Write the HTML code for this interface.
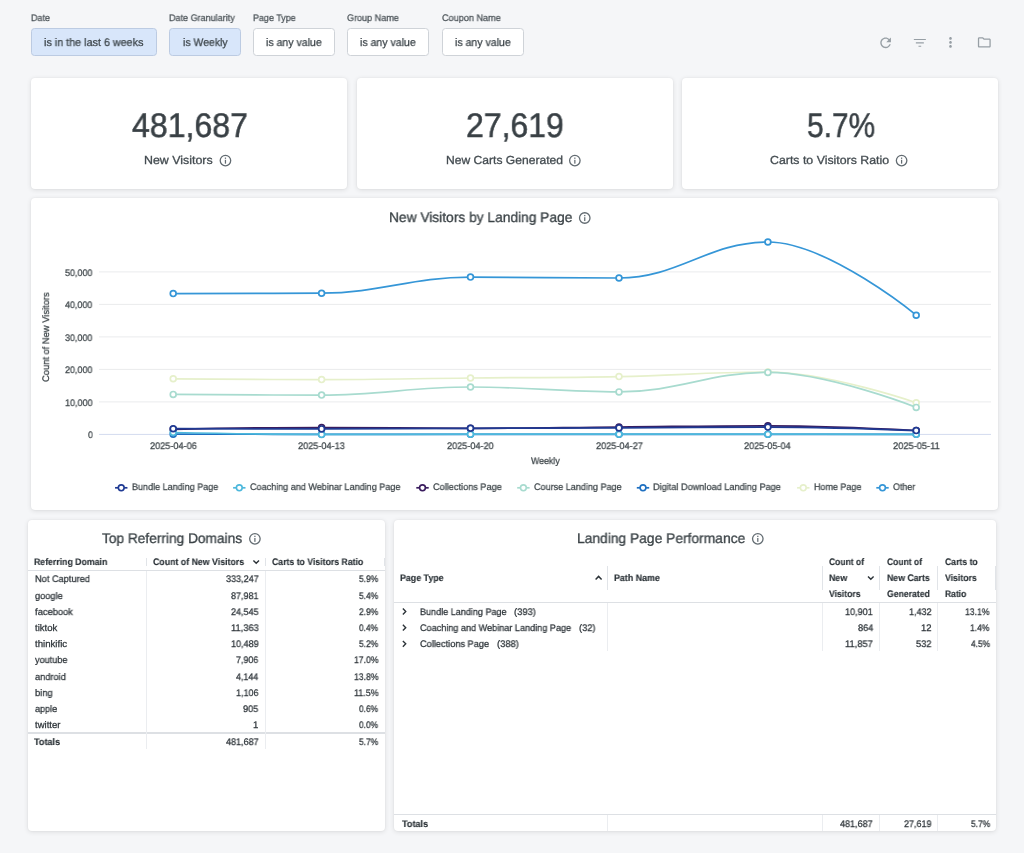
<!DOCTYPE html>
<html>
<head>
<meta charset="utf-8">
<title>Dashboard</title>
<style>
*{box-sizing:border-box;margin:0;padding:0}
html,body{width:1024px;height:853px;overflow:hidden;background:#f5f6f8;font-family:"Liberation Sans",sans-serif;color:#3a4245}
.abs{position:absolute}
.t{position:absolute;will-change:transform;text-rendering:geometricPrecision;white-space:nowrap;line-height:normal;transform-origin:0 0}
.fbtn{position:absolute;top:28.3px;height:27.8px;border:1px solid #cfd3d8;border-radius:3.5px;background:#fff}
.fbtn.on{background:#d8e6fa;border-color:#bccbe2}
.card{position:absolute;background:#fff;border-radius:4px;box-shadow:0 1px 5px rgba(0,0,0,0.105),0 0 2px rgba(0,0,0,0.06)}
</style>
</head>
<body>
<div class="fbtn on" style="left:31.2px;width:125.5px"></div>
<div class="fbtn on" style="left:169.3px;width:71.3px"></div>
<div class="fbtn" style="left:253.1px;width:81.5px"></div>
<div class="fbtn" style="left:347.3px;width:81.9px"></div>
<div class="fbtn" style="left:441.9px;width:81.8px"></div>
<div class="card" style="left:31px;top:78px;width:316px;height:111px"></div>
<div class="card" style="left:357px;top:78px;width:316px;height:111px"></div>
<div class="card" style="left:682px;top:78px;width:316px;height:111px"></div>
<div class="card" style="left:31px;top:198.3px;width:967px;height:311.7px"></div>
<div class="card" style="left:28px;top:519.5px;width:357px;height:311.5px"></div>
<div class="card" style="left:394.3px;top:519.5px;width:602px;height:311.5px"></div>
<div class="abs" style="left:28.00px;top:569.60px;width:357.00px;height:1.50px;background:#dde0e4"></div><div class="abs" style="left:28.00px;top:732.10px;width:357.00px;height:1.50px;background:#dde0e4"></div><div class="abs" style="left:146.20px;top:571.00px;width:1.00px;height:177.50px;background:#ebedf0"></div><div class="abs" style="left:146.20px;top:557.60px;width:1.00px;height:8.50px;background:#e1e4e8"></div><div class="abs" style="left:264.90px;top:571.00px;width:1.00px;height:177.50px;background:#ebedf0"></div><div class="abs" style="left:264.90px;top:557.60px;width:1.00px;height:8.50px;background:#e1e4e8"></div><div class="abs" style="left:383.80px;top:557.60px;width:1.00px;height:8.50px;background:#e1e4e8"></div><div class="abs" style="left:394.30px;top:601.60px;width:602.00px;height:1.50px;background:#dde0e4"></div><div class="abs" style="left:394.30px;top:813.70px;width:602.00px;height:1.50px;background:#dde0e4"></div><div class="abs" style="left:607.00px;top:603.00px;width:1.00px;height:47.50px;background:#ebedf0"></div><div class="abs" style="left:607.00px;top:815.00px;width:1.00px;height:16.00px;background:#ebedf0"></div><div class="abs" style="left:607.00px;top:565.80px;width:1.00px;height:24.00px;background:#e1e4e8"></div><div class="abs" style="left:821.50px;top:603.00px;width:1.00px;height:47.50px;background:#ebedf0"></div><div class="abs" style="left:821.50px;top:815.00px;width:1.00px;height:16.00px;background:#ebedf0"></div><div class="abs" style="left:821.50px;top:565.80px;width:1.00px;height:24.00px;background:#e1e4e8"></div><div class="abs" style="left:879.20px;top:603.00px;width:1.00px;height:47.50px;background:#ebedf0"></div><div class="abs" style="left:879.20px;top:815.00px;width:1.00px;height:16.00px;background:#ebedf0"></div><div class="abs" style="left:879.20px;top:565.80px;width:1.00px;height:24.00px;background:#e1e4e8"></div><div class="abs" style="left:937.40px;top:603.00px;width:1.00px;height:47.50px;background:#ebedf0"></div><div class="abs" style="left:937.40px;top:815.00px;width:1.00px;height:16.00px;background:#ebedf0"></div><div class="abs" style="left:937.40px;top:565.80px;width:1.00px;height:24.00px;background:#e1e4e8"></div><div class="abs" style="left:994.60px;top:565.80px;width:1.00px;height:24.00px;background:#e1e4e8"></div>
<svg class="abs" style="left:0;top:0" width="1024" height="853" viewBox="0 0 1024 853">
<rect x="99" y="271.4" width="892" height="1" fill="#eaebed"/>
<rect x="99" y="303.9" width="892" height="1" fill="#eaebed"/>
<rect x="99" y="336.4" width="892" height="1" fill="#eaebed"/>
<rect x="99" y="368.9" width="892" height="1" fill="#eaebed"/>
<rect x="99" y="401.4" width="892" height="1" fill="#eaebed"/>
<rect x="99" y="433.9" width="892" height="1" fill="#d3dbef"/>
<path d="M173.20 293.60 C173.20 293.60 262.24 293.60 321.60 293.20 C381.16 292.80 410.94 277.10 470.50 277.10 C529.90 277.10 559.60 278.00 619.00 278.00 C678.56 278.00 708.34 242.00 767.90 242.00 C827.22 242.00 916.20 315.20 916.20 315.20" fill="none" stroke="#3596d7" stroke-width="1.7" stroke-linecap="round" stroke-linejoin="round"/>
<circle cx="173.20" cy="293.60" r="2.9" fill="#fff" stroke="#3596d7" stroke-width="1.7"/>
<circle cx="321.60" cy="293.20" r="2.9" fill="#fff" stroke="#3596d7" stroke-width="1.7"/>
<circle cx="470.50" cy="277.10" r="2.9" fill="#fff" stroke="#3596d7" stroke-width="1.7"/>
<circle cx="619.00" cy="278.00" r="2.9" fill="#fff" stroke="#3596d7" stroke-width="1.7"/>
<circle cx="767.90" cy="242.00" r="2.9" fill="#fff" stroke="#3596d7" stroke-width="1.7"/>
<circle cx="916.20" cy="315.20" r="2.9" fill="#fff" stroke="#3596d7" stroke-width="1.7"/>
<path d="M173.20 378.80 C173.20 378.80 262.24 379.60 321.60 379.60 C381.16 379.60 410.94 378.60 470.50 378.00 C529.90 377.40 559.60 377.80 619.00 376.60 C678.56 375.40 708.34 372.00 767.90 372.00 C827.22 372.00 916.20 402.70 916.20 402.70" fill="none" stroke="#e6f0cb" stroke-width="1.7" stroke-linecap="round" stroke-linejoin="round"/>
<circle cx="173.20" cy="378.80" r="2.9" fill="#fff" stroke="#e6f0cb" stroke-width="1.7"/>
<circle cx="321.60" cy="379.60" r="2.9" fill="#fff" stroke="#e6f0cb" stroke-width="1.7"/>
<circle cx="470.50" cy="378.00" r="2.9" fill="#fff" stroke="#e6f0cb" stroke-width="1.7"/>
<circle cx="619.00" cy="376.60" r="2.9" fill="#fff" stroke="#e6f0cb" stroke-width="1.7"/>
<circle cx="767.90" cy="372.00" r="2.9" fill="#fff" stroke="#e6f0cb" stroke-width="1.7"/>
<circle cx="916.20" cy="402.70" r="2.9" fill="#fff" stroke="#e6f0cb" stroke-width="1.7"/>
<path d="M173.20 434.20 C173.20 434.20 262.24 434.30 321.60 434.30 C381.16 434.30 410.94 434.30 470.50 434.30 C529.90 434.30 559.60 434.30 619.00 434.30 C678.56 434.30 708.34 434.30 767.90 434.30 C827.22 434.30 916.20 434.30 916.20 434.30" fill="none" stroke="#1f70c1" stroke-width="1.7" stroke-linecap="round" stroke-linejoin="round"/>
<circle cx="173.20" cy="434.20" r="2.9" fill="#fff" stroke="#1f70c1" stroke-width="1.7"/>
<circle cx="321.60" cy="434.30" r="2.9" fill="#fff" stroke="#1f70c1" stroke-width="1.7"/>
<circle cx="470.50" cy="434.30" r="2.9" fill="#fff" stroke="#1f70c1" stroke-width="1.7"/>
<circle cx="619.00" cy="434.30" r="2.9" fill="#fff" stroke="#1f70c1" stroke-width="1.7"/>
<circle cx="767.90" cy="434.30" r="2.9" fill="#fff" stroke="#1f70c1" stroke-width="1.7"/>
<circle cx="916.20" cy="434.30" r="2.9" fill="#fff" stroke="#1f70c1" stroke-width="1.7"/>
<path d="M173.20 394.40 C173.20 394.40 262.24 395.10 321.60 395.10 C381.16 395.10 410.94 387.00 470.50 387.00 C529.90 387.00 559.60 391.90 619.00 391.90 C678.56 391.90 708.34 372.40 767.90 372.40 C827.22 372.40 916.20 407.40 916.20 407.40" fill="none" stroke="#a8dbcf" stroke-width="1.7" stroke-linecap="round" stroke-linejoin="round"/>
<circle cx="173.20" cy="394.40" r="2.9" fill="#fff" stroke="#a8dbcf" stroke-width="1.7"/>
<circle cx="321.60" cy="395.10" r="2.9" fill="#fff" stroke="#a8dbcf" stroke-width="1.7"/>
<circle cx="470.50" cy="387.00" r="2.9" fill="#fff" stroke="#a8dbcf" stroke-width="1.7"/>
<circle cx="619.00" cy="391.90" r="2.9" fill="#fff" stroke="#a8dbcf" stroke-width="1.7"/>
<circle cx="767.90" cy="372.40" r="2.9" fill="#fff" stroke="#a8dbcf" stroke-width="1.7"/>
<circle cx="916.20" cy="407.40" r="2.9" fill="#fff" stroke="#a8dbcf" stroke-width="1.7"/>
<path d="M173.20 429.30 C173.20 429.30 262.24 427.50 321.60 427.50 C381.16 427.50 410.94 428.30 470.50 428.30 C529.90 428.30 559.60 427.50 619.00 427.00 C678.56 426.50 708.34 425.80 767.90 425.80 C827.22 425.80 916.20 430.50 916.20 430.50" fill="none" stroke="#3a1c5e" stroke-width="1.7" stroke-linecap="round" stroke-linejoin="round"/>
<circle cx="173.20" cy="429.30" r="2.9" fill="#fff" stroke="#3a1c5e" stroke-width="1.7"/>
<circle cx="321.60" cy="427.50" r="2.9" fill="#fff" stroke="#3a1c5e" stroke-width="1.7"/>
<circle cx="470.50" cy="428.30" r="2.9" fill="#fff" stroke="#3a1c5e" stroke-width="1.7"/>
<circle cx="619.00" cy="427.00" r="2.9" fill="#fff" stroke="#3a1c5e" stroke-width="1.7"/>
<circle cx="767.90" cy="425.80" r="2.9" fill="#fff" stroke="#3a1c5e" stroke-width="1.7"/>
<circle cx="916.20" cy="430.50" r="2.9" fill="#fff" stroke="#3a1c5e" stroke-width="1.7"/>
<path d="M173.20 432.50 C173.20 432.50 262.24 434.40 321.60 434.40 C381.16 434.40 410.94 434.20 470.50 434.20 C529.90 434.20 559.60 434.20 619.00 434.20 C678.56 434.20 708.34 434.20 767.90 434.20 C827.22 434.20 916.20 434.30 916.20 434.30" fill="none" stroke="#4db8dc" stroke-width="1.7" stroke-linecap="round" stroke-linejoin="round"/>
<circle cx="173.20" cy="432.50" r="2.9" fill="#fff" stroke="#4db8dc" stroke-width="1.7"/>
<circle cx="321.60" cy="434.40" r="2.9" fill="#fff" stroke="#4db8dc" stroke-width="1.7"/>
<circle cx="470.50" cy="434.20" r="2.9" fill="#fff" stroke="#4db8dc" stroke-width="1.7"/>
<circle cx="619.00" cy="434.20" r="2.9" fill="#fff" stroke="#4db8dc" stroke-width="1.7"/>
<circle cx="767.90" cy="434.20" r="2.9" fill="#fff" stroke="#4db8dc" stroke-width="1.7"/>
<circle cx="916.20" cy="434.30" r="2.9" fill="#fff" stroke="#4db8dc" stroke-width="1.7"/>
<path d="M173.20 428.70 C173.20 428.70 262.24 428.90 321.60 428.90 C381.16 428.90 410.94 428.50 470.50 428.30 C529.90 428.10 559.60 428.14 619.00 427.90 C678.56 427.66 708.34 427.10 767.90 427.10 C827.22 427.10 916.20 430.60 916.20 430.60" fill="none" stroke="#1f3a93" stroke-width="1.7" stroke-linecap="round" stroke-linejoin="round"/>
<circle cx="173.20" cy="428.70" r="2.9" fill="#fff" stroke="#1f3a93" stroke-width="1.7"/>
<circle cx="321.60" cy="428.90" r="2.9" fill="#fff" stroke="#1f3a93" stroke-width="1.7"/>
<circle cx="470.50" cy="428.30" r="2.9" fill="#fff" stroke="#1f3a93" stroke-width="1.7"/>
<circle cx="619.00" cy="427.90" r="2.9" fill="#fff" stroke="#1f3a93" stroke-width="1.7"/>
<circle cx="767.90" cy="427.10" r="2.9" fill="#fff" stroke="#1f3a93" stroke-width="1.7"/>
<circle cx="916.20" cy="430.60" r="2.9" fill="#fff" stroke="#1f3a93" stroke-width="1.7"/>
<path d="M115.05 487.8H127.45" stroke="#1f3a93" stroke-width="1.7"/>
<circle cx="121.25" cy="487.8" r="2.9" fill="#fff" stroke="#1f3a93" stroke-width="1.6"/>
<path d="M233.10 487.8H245.50" stroke="#4db8dc" stroke-width="1.7"/>
<circle cx="239.30" cy="487.8" r="2.9" fill="#fff" stroke="#4db8dc" stroke-width="1.6"/>
<path d="M416.30 487.8H428.70" stroke="#3a1c5e" stroke-width="1.7"/>
<circle cx="422.50" cy="487.8" r="2.9" fill="#fff" stroke="#3a1c5e" stroke-width="1.6"/>
<path d="M517.20 487.8H529.60" stroke="#a8dbcf" stroke-width="1.7"/>
<circle cx="523.40" cy="487.8" r="2.9" fill="#fff" stroke="#a8dbcf" stroke-width="1.6"/>
<path d="M636.80 487.8H649.20" stroke="#1f70c1" stroke-width="1.7"/>
<circle cx="643.00" cy="487.8" r="2.9" fill="#fff" stroke="#1f70c1" stroke-width="1.6"/>
<path d="M797.10 487.8H809.50" stroke="#e6f0cb" stroke-width="1.7"/>
<circle cx="803.30" cy="487.8" r="2.9" fill="#fff" stroke="#e6f0cb" stroke-width="1.6"/>
<path d="M876.30 487.8H888.70" stroke="#3596d7" stroke-width="1.7"/>
<circle cx="882.50" cy="487.8" r="2.9" fill="#fff" stroke="#3596d7" stroke-width="1.6"/>
</svg>

<svg class="abs" style="left:0;top:0" width="1024" height="853" viewBox="0 0 1024 853"><path d="M253.40 560.50 L256.20 563.30 L259.00 560.50" fill="none" stroke="#2b3237" stroke-width="1.4"/><path d="M868.00 576.50 L870.80 579.30 L873.60 576.50" fill="none" stroke="#2b3237" stroke-width="1.4"/><path d="M595.60 579.40 L598.60 576.40 L601.60 579.40" fill="none" stroke="#2b3237" stroke-width="1.45"/><path d="M402.85 608.60 L405.75 611.50 L402.85 614.40" fill="none" stroke="#2b3237" stroke-width="1.35"/><path d="M402.85 624.75 L405.75 627.65 L402.85 630.55" fill="none" stroke="#2b3237" stroke-width="1.35"/><path d="M402.85 640.90 L405.75 643.80 L402.85 646.70" fill="none" stroke="#2b3237" stroke-width="1.35"/><g transform="translate(225.45 160.60)"><circle r="5.25" fill="none" stroke="#626b71" stroke-width="1.3"/><rect x="-0.62" y="-3.05" width="1.24" height="1.3" fill="#626b71"/><rect x="-0.62" y="-0.8" width="1.24" height="3.85" fill="#626b71"/></g><g transform="translate(574.85 160.60)"><circle r="5.25" fill="none" stroke="#626b71" stroke-width="1.3"/><rect x="-0.62" y="-3.05" width="1.24" height="1.3" fill="#626b71"/><rect x="-0.62" y="-0.8" width="1.24" height="3.85" fill="#626b71"/></g><g transform="translate(901.60 160.60)"><circle r="5.25" fill="none" stroke="#626b71" stroke-width="1.3"/><rect x="-0.62" y="-3.05" width="1.24" height="1.3" fill="#626b71"/><rect x="-0.62" y="-0.8" width="1.24" height="3.85" fill="#626b71"/></g><g transform="translate(584.75 218.00)"><circle r="5.25" fill="none" stroke="#626b71" stroke-width="1.3"/><rect x="-0.62" y="-3.05" width="1.24" height="1.3" fill="#626b71"/><rect x="-0.62" y="-0.8" width="1.24" height="3.85" fill="#626b71"/></g><g transform="translate(254.90 538.80)"><circle r="5.25" fill="none" stroke="#626b71" stroke-width="1.3"/><rect x="-0.62" y="-3.05" width="1.24" height="1.3" fill="#626b71"/><rect x="-0.62" y="-0.8" width="1.24" height="3.85" fill="#626b71"/></g><g transform="translate(757.80 538.80)"><circle r="5.25" fill="none" stroke="#626b71" stroke-width="1.3"/><rect x="-0.62" y="-3.05" width="1.24" height="1.3" fill="#626b71"/><rect x="-0.62" y="-0.8" width="1.24" height="3.85" fill="#626b71"/></g><g transform="translate(877.60 34.85) scale(0.6667)"><path fill="#979fa5" d="M17.65 6.35C16.2 4.9 14.21 4 12 4c-4.42 0-7.99 3.58-7.99 8s3.57 8 7.99 8c3.73 0 6.84-2.55 7.73-6h-2.08c-.82 2.33-3.04 4-5.65 4-3.31 0-6-2.69-6-6s2.69-6 6-6c1.66 0 3.14.69 4.22 1.78L13 11h7V4l-2.35 2.35z"/></g><g transform="translate(911.85 34.85) scale(0.6667)"><path fill="#979fa5" d="M10 17.8h4v-1.6h-4zM3 6.2v1.6h18V6.2zM6 12.8h12v-1.6H6z"/></g><g transform="translate(942.50 34.45) scale(0.6667)"><path fill="#979fa5" d="M12 8c1.1 0 2-.9 2-2s-.9-2-2-2-2 .9-2 2 .9 2 2 2zm0 2c-1.1 0-2 .9-2 2s.9 2 2 2 2-.9 2-2-.9-2-2-2zm0 6c-1.1 0-2 .9-2 2s.9 2 2 2 2-.9 2-2-.9-2-2-2z"/></g><g transform="translate(976.60 34.70) scale(0.6417)"><path fill="#979fa5" d="M9.17 6l2 2H20v10H4V6h5.17M10 4H4c-1.1 0-1.99.9-1.99 2L2 18c0 1.1.9 2 2 2h16c1.1 0 2-.9 2-2V8c0-1.1-.9-2-2-2h-8l-2-2z"/></g></svg>
<span class="t" style="left:30.88px;top:13px;font-size:9.5px;color:#4a5257;transform:scaleX(0.9445);-webkit-text-stroke:0.25px #4a5257">Date</span>
<span class="t" style="left:169.08px;top:13px;font-size:9.5px;color:#4a5257;transform:scaleX(0.9498);-webkit-text-stroke:0.25px #4a5257">Date Granularity</span>
<span class="t" style="left:252.71px;top:13px;font-size:9.5px;color:#4a5257;transform:scaleX(0.9413);-webkit-text-stroke:0.25px #4a5257">Page Type</span>
<span class="t" style="left:347.19px;top:13px;font-size:9.5px;color:#4a5257;transform:scaleX(0.9535);-webkit-text-stroke:0.25px #4a5257">Group Name</span>
<span class="t" style="left:441.79px;top:13px;font-size:9.5px;color:#4a5257;transform:scaleX(0.9588);-webkit-text-stroke:0.25px #4a5257">Coupon Name</span>
<span class="t" style="left:44.09px;top:37px;font-size:11.0px;color:#3c4449;transform:scaleX(0.9798);-webkit-text-stroke:0.25px #3c4449">is in the last 6 weeks</span>
<span class="t" style="left:182.55px;top:37px;font-size:11.0px;color:#3c4449;transform:scaleX(0.9525);-webkit-text-stroke:0.25px #3c4449">is Weekly</span>
<span class="t" style="left:266.05px;top:37px;font-size:11.0px;color:#3c4449;transform:scaleX(0.9599);-webkit-text-stroke:0.25px #3c4449">is any value</span>
<span class="t" style="left:360.25px;top:37px;font-size:11.0px;color:#3c4449;transform:scaleX(0.9599);-webkit-text-stroke:0.25px #3c4449">is any value</span>
<span class="t" style="left:454.85px;top:37px;font-size:11.0px;color:#3c4449;transform:scaleX(0.9599);-webkit-text-stroke:0.25px #3c4449">is any value</span>
<span class="t" style="left:131.71px;top:107px;font-size:34.2px;color:#394045;transform:scaleX(0.9386);-webkit-text-stroke:0.5px #394045">481,687</span>
<span class="t" style="left:466.32px;top:107px;font-size:34.2px;color:#394045;transform:scaleX(0.9356);-webkit-text-stroke:0.5px #394045">27,619</span>
<span class="t" style="left:806.82px;top:107px;font-size:34.2px;color:#394045;transform:scaleX(0.8748);-webkit-text-stroke:0.5px #394045">5.7%</span>
<span class="t" style="left:143.78px;top:154px;font-size:11.7px;color:#444c51;transform:scaleX(1.0611);-webkit-text-stroke:0.3px #444c51">New Visitors</span>
<span class="t" style="left:445.70px;top:154px;font-size:11.7px;color:#444c51;transform:scaleX(1.0349);-webkit-text-stroke:0.3px #444c51">New Carts Generated</span>
<span class="t" style="left:769.64px;top:154px;font-size:11.7px;color:#444c51;transform:scaleX(1.0558);-webkit-text-stroke:0.3px #444c51">Carts to Visitors Ratio</span>
<span class="t" style="left:388.64px;top:209px;font-size:14.0px;color:#3a4246;transform:scaleX(0.9829);-webkit-text-stroke:0.3px #3a4246">New Visitors by Landing Page</span>
<span class="t" style="left:65.25px;top:268px;font-size:9.5px;color:#3d4549;transform:scaleX(0.9440);-webkit-text-stroke:0.25px #3d4549">50,000</span>
<span class="t" style="left:65.40px;top:300px;font-size:9.5px;color:#3d4549;transform:scaleX(0.9387);-webkit-text-stroke:0.25px #3d4549">40,000</span>
<span class="t" style="left:65.31px;top:333px;font-size:9.5px;color:#3d4549;transform:scaleX(0.9420);-webkit-text-stroke:0.25px #3d4549">30,000</span>
<span class="t" style="left:65.27px;top:365px;font-size:9.5px;color:#3d4549;transform:scaleX(0.9432);-webkit-text-stroke:0.25px #3d4549">20,000</span>
<span class="t" style="left:65.10px;top:398px;font-size:9.5px;color:#3d4549;transform:scaleX(0.9494);-webkit-text-stroke:0.25px #3d4549">10,000</span>
<span class="t" style="left:87.96px;top:430px;font-size:9.5px;color:#3d4549;transform:scaleX(0.9084);-webkit-text-stroke:0.25px #3d4549">0</span>
<span class="t" style="left:149.78px;top:441px;font-size:9.5px;color:#3d4549;transform:scaleX(0.9644);-webkit-text-stroke:0.25px #3d4549">2025-04-06</span>
<span class="t" style="left:298.18px;top:441px;font-size:9.5px;color:#3d4549;transform:scaleX(0.9645);-webkit-text-stroke:0.25px #3d4549">2025-04-13</span>
<span class="t" style="left:447.08px;top:441px;font-size:9.5px;color:#3d4549;transform:scaleX(0.9616);-webkit-text-stroke:0.25px #3d4549">2025-04-20</span>
<span class="t" style="left:595.58px;top:441px;font-size:9.5px;color:#3d4549;transform:scaleX(0.9654);-webkit-text-stroke:0.25px #3d4549">2025-04-27</span>
<span class="t" style="left:744.48px;top:441px;font-size:9.5px;color:#3d4549;transform:scaleX(0.9606);-webkit-text-stroke:0.25px #3d4549">2025-05-04</span>
<span class="t" style="left:892.78px;top:441px;font-size:9.5px;color:#3d4549;transform:scaleX(0.9792);-webkit-text-stroke:0.25px #3d4549">2025-05-11</span>
<span class="t" style="left:530.53px;top:456px;font-size:9.5px;color:#3d4549;transform:scaleX(0.9279);-webkit-text-stroke:0.25px #3d4549">Weekly</span>
<span class="t" style="left:49px;top:374.17px;font-size:9.5px;color:#3d4549;-webkit-text-stroke:0.25px #3d4549;transform-origin:0 8px;transform:rotate(-90deg) scaleX(0.9826)">Count of New Visitors</span>
<span class="t" style="left:131.58px;top:482px;font-size:9.5px;color:#3d4549;transform:scaleX(0.9494);-webkit-text-stroke:0.25px #3d4549">Bundle Landing Page</span>
<span class="t" style="left:249.59px;top:482px;font-size:9.5px;color:#3d4549;transform:scaleX(0.9531);-webkit-text-stroke:0.25px #3d4549">Coaching and Webinar Landing Page</span>
<span class="t" style="left:432.79px;top:482px;font-size:9.5px;color:#3d4549;transform:scaleX(0.9646);-webkit-text-stroke:0.25px #3d4549">Collections Page</span>
<span class="t" style="left:533.79px;top:482px;font-size:9.5px;color:#3d4549;transform:scaleX(0.9542);-webkit-text-stroke:0.25px #3d4549">Course Landing Page</span>
<span class="t" style="left:653.47px;top:482px;font-size:9.5px;color:#3d4549;transform:scaleX(0.9637);-webkit-text-stroke:0.25px #3d4549">Digital Download Landing Page</span>
<span class="t" style="left:813.68px;top:482px;font-size:9.5px;color:#3d4549;transform:scaleX(0.9438);-webkit-text-stroke:0.25px #3d4549">Home Page</span>
<span class="t" style="left:892.52px;top:482px;font-size:9.5px;color:#3d4549;transform:scaleX(0.9367);-webkit-text-stroke:0.25px #3d4549">Other</span>
<span class="t" style="left:102.13px;top:530px;font-size:14.0px;color:#3a4246;transform:scaleX(0.9781);-webkit-text-stroke:0.3px #3a4246">Top Referring Domains</span>
<span class="t" style="left:33.80px;top:557px;font-size:9.5px;color:#2b3237;transform:scaleX(0.9189);-webkit-text-stroke:0.15px #2b3237;font-weight:700">Referring Domain</span>
<span class="t" style="left:153.34px;top:557px;font-size:9.5px;color:#2b3237;transform:scaleX(0.9250);-webkit-text-stroke:0.15px #2b3237;font-weight:700">Count of New Visitors</span>
<span class="t" style="left:272.14px;top:557px;font-size:9.5px;color:#2b3237;transform:scaleX(0.9162);-webkit-text-stroke:0.15px #2b3237;font-weight:700">Carts to Visitors Ratio</span>
<span class="t" style="left:34.70px;top:574px;font-size:9.5px;color:#2b3237;transform:scaleX(0.9709);-webkit-text-stroke:0.25px #2b3237">Not Captured</span>
<span class="t" style="left:226.03px;top:574px;font-size:9.5px;color:#2b3237;transform:scaleX(0.9545);-webkit-text-stroke:0.25px #2b3237">333,247</span>
<span class="t" style="left:359.24px;top:574px;font-size:9.5px;color:#2b3237;transform:scaleX(0.8825);-webkit-text-stroke:0.25px #2b3237">5.9%</span>
<span class="t" style="left:34.70px;top:591px;font-size:9.5px;color:#2b3237;transform:scaleX(0.9727);-webkit-text-stroke:0.25px #2b3237">google</span>
<span class="t" style="left:231.25px;top:591px;font-size:9.5px;color:#2b3237;transform:scaleX(0.9452);-webkit-text-stroke:0.25px #2b3237">87,981</span>
<span class="t" style="left:359.24px;top:591px;font-size:9.5px;color:#2b3237;transform:scaleX(0.8825);-webkit-text-stroke:0.25px #2b3237">5.4%</span>
<span class="t" style="left:34.70px;top:607px;font-size:9.5px;color:#2b3237;transform:scaleX(0.9831);-webkit-text-stroke:0.25px #2b3237">facebook</span>
<span class="t" style="left:231.17px;top:607px;font-size:9.5px;color:#2b3237;transform:scaleX(0.9469);-webkit-text-stroke:0.25px #2b3237">24,545</span>
<span class="t" style="left:359.26px;top:607px;font-size:9.5px;color:#2b3237;transform:scaleX(0.8815);-webkit-text-stroke:0.25px #2b3237">2.9%</span>
<span class="t" style="left:34.70px;top:623px;font-size:9.5px;color:#2b3237;transform:scaleX(1.0095);-webkit-text-stroke:0.25px #2b3237">tiktok</span>
<span class="t" style="left:230.98px;top:623px;font-size:9.5px;color:#2b3237;transform:scaleX(0.9817);-webkit-text-stroke:0.25px #2b3237">11,363</span>
<span class="t" style="left:359.41px;top:623px;font-size:9.5px;color:#2b3237;transform:scaleX(0.8746);-webkit-text-stroke:0.25px #2b3237">0.4%</span>
<span class="t" style="left:34.70px;top:639px;font-size:9.5px;color:#2b3237;transform:scaleX(1.0153);-webkit-text-stroke:0.25px #2b3237">thinkific</span>
<span class="t" style="left:231.00px;top:639px;font-size:9.5px;color:#2b3237;transform:scaleX(0.9511);-webkit-text-stroke:0.25px #2b3237">10,489</span>
<span class="t" style="left:359.24px;top:639px;font-size:9.5px;color:#2b3237;transform:scaleX(0.8825);-webkit-text-stroke:0.25px #2b3237">5.2%</span>
<span class="t" style="left:34.70px;top:655px;font-size:9.5px;color:#2b3237;transform:scaleX(0.9592);-webkit-text-stroke:0.25px #2b3237">youtube</span>
<span class="t" style="left:236.44px;top:655px;font-size:9.5px;color:#2b3237;transform:scaleX(0.9337);-webkit-text-stroke:0.25px #2b3237">7,906</span>
<span class="t" style="left:353.90px;top:655px;font-size:9.5px;color:#2b3237;transform:scaleX(0.9084);-webkit-text-stroke:0.25px #2b3237">17.0%</span>
<span class="t" style="left:34.70px;top:672px;font-size:9.5px;color:#2b3237;transform:scaleX(0.9717);-webkit-text-stroke:0.25px #2b3237">android</span>
<span class="t" style="left:236.48px;top:672px;font-size:9.5px;color:#2b3237;transform:scaleX(0.9303);-webkit-text-stroke:0.25px #2b3237">4,144</span>
<span class="t" style="left:353.90px;top:672px;font-size:9.5px;color:#2b3237;transform:scaleX(0.9084);-webkit-text-stroke:0.25px #2b3237">13.8%</span>
<span class="t" style="left:34.70px;top:688px;font-size:9.5px;color:#2b3237;transform:scaleX(0.9759);-webkit-text-stroke:0.25px #2b3237">bing</span>
<span class="t" style="left:236.18px;top:688px;font-size:9.5px;color:#2b3237;transform:scaleX(0.9449);-webkit-text-stroke:0.25px #2b3237">1,106</span>
<span class="t" style="left:353.89px;top:688px;font-size:9.5px;color:#2b3237;transform:scaleX(0.9390);-webkit-text-stroke:0.25px #2b3237">11.5%</span>
<span class="t" style="left:34.70px;top:704px;font-size:9.5px;color:#2b3237;transform:scaleX(0.9547);-webkit-text-stroke:0.25px #2b3237">apple</span>
<span class="t" style="left:243.36px;top:704px;font-size:9.5px;color:#2b3237;transform:scaleX(0.9630);-webkit-text-stroke:0.25px #2b3237">905</span>
<span class="t" style="left:359.41px;top:704px;font-size:9.5px;color:#2b3237;transform:scaleX(0.8746);-webkit-text-stroke:0.25px #2b3237">0.6%</span>
<span class="t" style="left:34.70px;top:720px;font-size:9.5px;color:#2b3237;transform:scaleX(1.0038);-webkit-text-stroke:0.25px #2b3237">twitter</span>
<span class="t" style="left:253.48px;top:720px;font-size:9.5px;color:#2b3237;transform:scaleX(1.0092);-webkit-text-stroke:0.25px #2b3237">1</span>
<span class="t" style="left:359.41px;top:720px;font-size:9.5px;color:#2b3237;transform:scaleX(0.8746);-webkit-text-stroke:0.25px #2b3237">0.0%</span>
<span class="t" style="left:34.28px;top:737px;font-size:9.5px;color:#2b3237;transform:scaleX(0.9586);-webkit-text-stroke:0.15px #2b3237;font-weight:700">Totals</span>
<span class="t" style="left:226.12px;top:737px;font-size:9.5px;color:#2b3237;transform:scaleX(0.9516);-webkit-text-stroke:0.25px #2b3237">481,687</span>
<span class="t" style="left:359.24px;top:737px;font-size:9.5px;color:#2b3237;transform:scaleX(0.8825);-webkit-text-stroke:0.25px #2b3237">5.7%</span>
<span class="t" style="left:576.62px;top:530px;font-size:14.0px;color:#3a4246;transform:scaleX(0.9867);-webkit-text-stroke:0.3px #3a4246">Landing Page Performance</span>
<span class="t" style="left:400.19px;top:573px;font-size:9.5px;color:#2b3237;transform:scaleX(0.9311);-webkit-text-stroke:0.15px #2b3237;font-weight:700">Page Type</span>
<span class="t" style="left:614.09px;top:573px;font-size:9.5px;color:#2b3237;transform:scaleX(0.9361);-webkit-text-stroke:0.15px #2b3237;font-weight:700">Path Name</span>
<span class="t" style="left:828.60px;top:557px;font-size:9.5px;color:#2b3237;transform:scaleX(0.8966);-webkit-text-stroke:0.15px #2b3237;font-weight:700">Count of</span>
<span class="t" style="left:828.60px;top:573px;font-size:9.5px;color:#2b3237;transform:scaleX(0.9281);-webkit-text-stroke:0.15px #2b3237;font-weight:700">New</span>
<span class="t" style="left:828.60px;top:589px;font-size:9.5px;color:#2b3237;transform:scaleX(0.9085);-webkit-text-stroke:0.15px #2b3237;font-weight:700">Visitors</span>
<span class="t" style="left:886.70px;top:557px;font-size:9.5px;color:#2b3237;transform:scaleX(0.8966);-webkit-text-stroke:0.15px #2b3237;font-weight:700">Count of</span>
<span class="t" style="left:886.70px;top:573px;font-size:9.5px;color:#2b3237;transform:scaleX(0.9194);-webkit-text-stroke:0.15px #2b3237;font-weight:700">New Carts</span>
<span class="t" style="left:886.70px;top:589px;font-size:9.5px;color:#2b3237;transform:scaleX(0.9102);-webkit-text-stroke:0.15px #2b3237;font-weight:700">Generated</span>
<span class="t" style="left:944.70px;top:557px;font-size:9.5px;color:#2b3237;transform:scaleX(0.9119);-webkit-text-stroke:0.15px #2b3237;font-weight:700">Carts to</span>
<span class="t" style="left:944.70px;top:573px;font-size:9.5px;color:#2b3237;transform:scaleX(0.9143);-webkit-text-stroke:0.15px #2b3237;font-weight:700">Visitors</span>
<span class="t" style="left:944.70px;top:589px;font-size:9.5px;color:#2b3237;transform:scaleX(0.8939);-webkit-text-stroke:0.15px #2b3237;font-weight:700">Ratio</span>
<span class="t" style="left:419.57px;top:607px;font-size:9.5px;color:#2b3237;transform:scaleX(0.9528);-webkit-text-stroke:0.25px #2b3237">Bundle Landing Page</span>
<span class="t" style="left:514.36px;top:607px;font-size:9.5px;color:#2b3237;transform:scaleX(0.9806);-webkit-text-stroke:0.25px #2b3237">(393)</span>
<span class="t" style="left:845.19px;top:607px;font-size:9.5px;color:#2b3237;transform:scaleX(0.9540);-webkit-text-stroke:0.25px #2b3237">10,901</span>
<span class="t" style="left:908.88px;top:607px;font-size:9.5px;color:#2b3237;transform:scaleX(0.9463);-webkit-text-stroke:0.25px #2b3237">1,432</span>
<span class="t" style="left:965.30px;top:607px;font-size:9.5px;color:#2b3237;transform:scaleX(0.9084);-webkit-text-stroke:0.25px #2b3237">13.1%</span>
<span class="t" style="left:419.79px;top:623px;font-size:9.5px;color:#2b3237;transform:scaleX(0.9575);-webkit-text-stroke:0.25px #2b3237">Coaching and Webinar Landing Page</span>
<span class="t" style="left:578.86px;top:623px;font-size:9.5px;color:#2b3237;transform:scaleX(0.9692);-webkit-text-stroke:0.25px #2b3237">(32)</span>
<span class="t" style="left:857.61px;top:623px;font-size:9.5px;color:#2b3237;transform:scaleX(0.9635);-webkit-text-stroke:0.25px #2b3237">864</span>
<span class="t" style="left:921.02px;top:623px;font-size:9.5px;color:#2b3237;transform:scaleX(0.9884);-webkit-text-stroke:0.25px #2b3237">12</span>
<span class="t" style="left:970.49px;top:623px;font-size:9.5px;color:#2b3237;transform:scaleX(0.8892);-webkit-text-stroke:0.25px #2b3237">1.4%</span>
<span class="t" style="left:419.79px;top:639px;font-size:9.5px;color:#2b3237;transform:scaleX(0.9689);-webkit-text-stroke:0.25px #2b3237">Collections Page</span>
<span class="t" style="left:496.76px;top:639px;font-size:9.5px;color:#2b3237;transform:scaleX(0.9806);-webkit-text-stroke:0.25px #2b3237">(388)</span>
<span class="t" style="left:845.18px;top:639px;font-size:9.5px;color:#2b3237;transform:scaleX(0.9822);-webkit-text-stroke:0.25px #2b3237">11,857</span>
<span class="t" style="left:916.01px;top:639px;font-size:9.5px;color:#2b3237;transform:scaleX(0.9747);-webkit-text-stroke:0.25px #2b3237">532</span>
<span class="t" style="left:970.78px;top:639px;font-size:9.5px;color:#2b3237;transform:scaleX(0.8759);-webkit-text-stroke:0.25px #2b3237">4.5%</span>
<span class="t" style="left:401.68px;top:819px;font-size:9.5px;color:#2b3237;transform:scaleX(0.9586);-webkit-text-stroke:0.15px #2b3237;font-weight:700">Totals</span>
<span class="t" style="left:840.32px;top:819px;font-size:9.5px;color:#2b3237;transform:scaleX(0.9516);-webkit-text-stroke:0.25px #2b3237">481,687</span>
<span class="t" style="left:903.87px;top:819px;font-size:9.5px;color:#2b3237;transform:scaleX(0.9449);-webkit-text-stroke:0.25px #2b3237">27,619</span>
<span class="t" style="left:970.64px;top:819px;font-size:9.5px;color:#2b3237;transform:scaleX(0.8825);-webkit-text-stroke:0.25px #2b3237">5.7%</span>
</body>
</html>
